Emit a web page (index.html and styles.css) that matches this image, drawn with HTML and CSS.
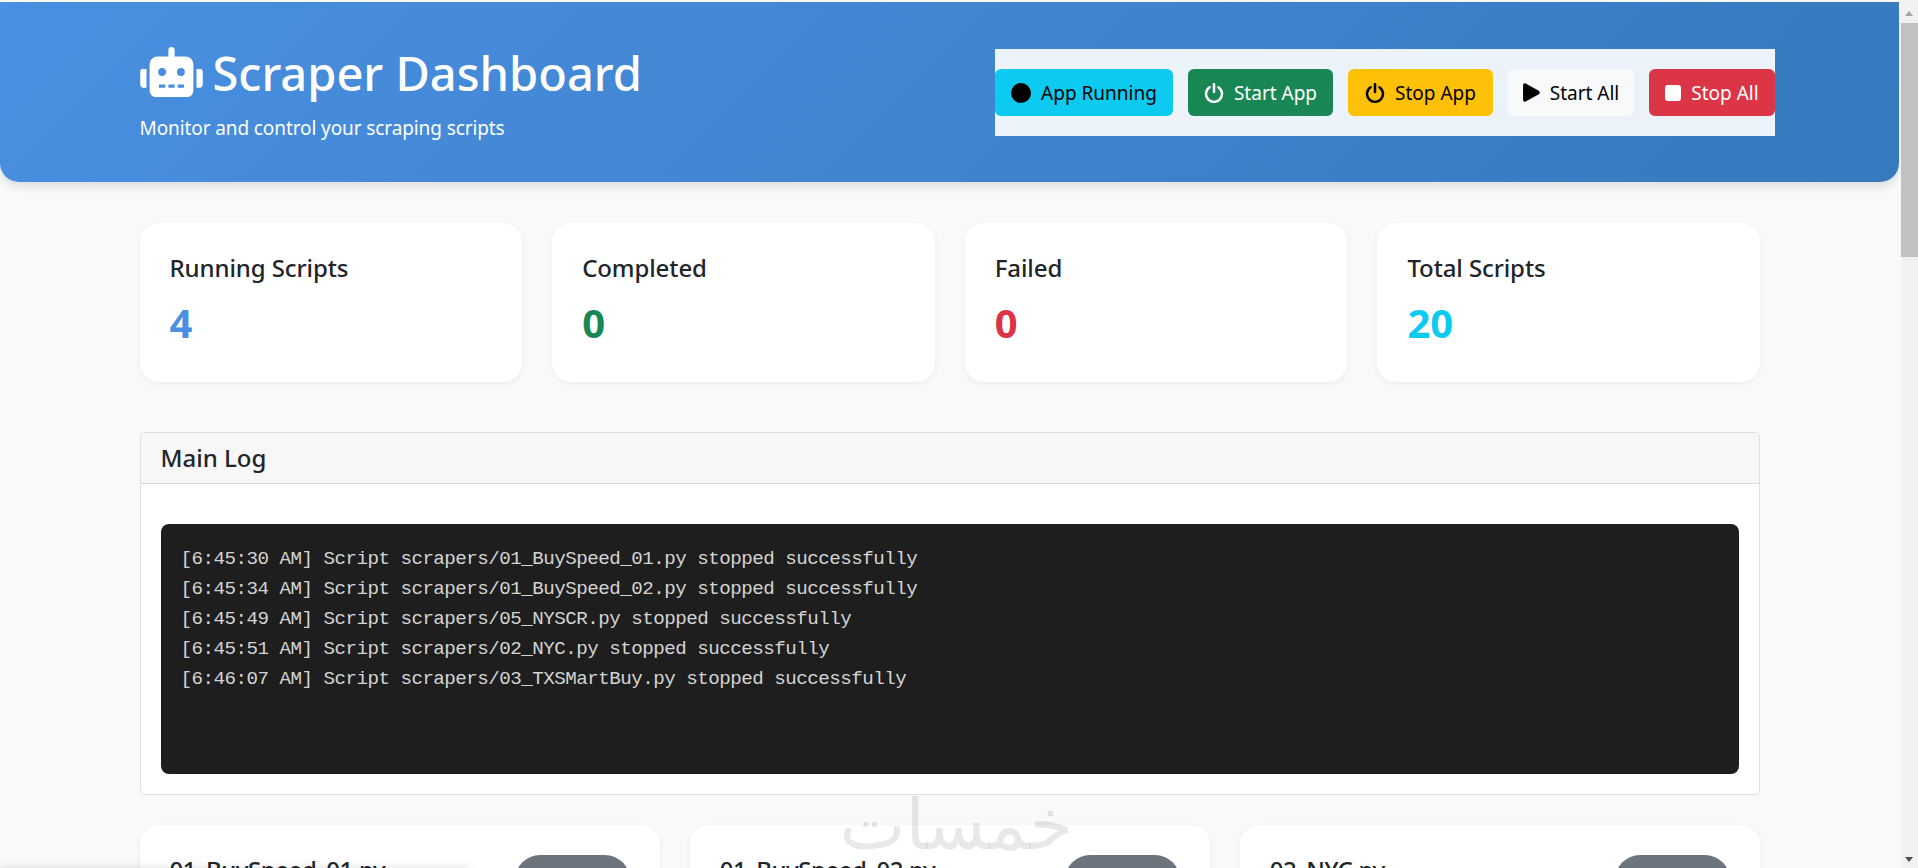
FILE: index.html
```html
<!DOCTYPE html>
<html lang="en">
<head>
<meta charset="utf-8">
<title>Scraper Dashboard</title>
<link rel="stylesheet" href="styles.css">
</head>
<body>
<header class="hero">
  <div class="hero-inner">
    <div class="brand">
      <h1 class="brand-title">
        <svg class="robot" viewBox="0 0 640 512" aria-hidden="true"><path d="M32,224H64V416H32A31.96166,31.96166,0,0,1,0,384V256A31.96166,31.96166,0,0,1,32,224Zm512-48V448a64.06328,64.06328,0,0,1-64,64H160a64.06328,64.06328,0,0,1-64-64V176a79.974,79.974,0,0,1,80-80H288V32a32,32,0,0,1,64,0V96H464A79.974,79.974,0,0,1,544,176ZM264,256a40,40,0,1,0-40,40A39.997,39.997,0,0,0,264,256Zm-8,128H192v32h64Zm96,0H288v32h64ZM456,256a40,40,0,1,0-40,40A39.997,39.997,0,0,0,456,256Zm-8,128H384v32h64ZM640,256V384a31.96166,31.96166,0,0,1-32,32H576V224h32A31.96166,31.96166,0,0,1,640,256Z"/></svg>
        <span class="title-text">Scraper Dashboard</span>
      </h1>
      <p class="brand-sub">Monitor and control your scraping scripts</p>
    </div>
    <div class="actions">
      <button class="btn btn-info w-running"><svg class="ico" viewBox="0 0 20 20"><circle cx="10" cy="10" r="10"/></svg><span class="lbl">App Running</span></button>
      <button class="btn btn-success w-app"><svg class="ico" viewBox="0 0 20 20"><path class="stroke" d="M10 1v8M5.600 4.200a8 8 0 1 0 8.800 0"/></svg><span class="lbl">Start App</span></button>
      <button class="btn btn-warning w-app"><svg class="ico" viewBox="0 0 20 20"><path class="stroke" d="M10 1v8M5.600 4.200a8 8 0 1 0 8.800 0"/></svg><span class="lbl">Stop App</span></button>
      <button class="btn btn-light w-all"><svg class="ico ico-play" viewBox="0 0 16 18"><path d="M0 2.200C0 .6 1.600-.2 2.900.6l12 6.800c1.200.8 1.200 2.400 0 3.200l-12 6.800C1.600 18.200 0 17.400 0 15.800z"/></svg><span class="lbl">Start All</span></button>
      <button class="btn btn-danger w-all"><svg class="ico ico-square" viewBox="0 0 16 16"><rect width="16" height="16" rx="3"/></svg><span class="lbl">Stop All</span></button>
    </div>
  </div>
</header>

<main class="page">
  <section class="stats">
    <div class="stat"><h5 class="stat-title">Running Scripts</h5><div class="stat-value c-primary">4</div></div>
    <div class="stat"><h5 class="stat-title">Completed</h5><div class="stat-value c-success">0</div></div>
    <div class="stat"><h5 class="stat-title">Failed</h5><div class="stat-value c-danger">0</div></div>
    <div class="stat"><h5 class="stat-title">Total Scripts</h5><div class="stat-value c-info">20</div></div>
  </section>

  <section class="log-card">
    <div class="log-head"><h5 class="log-title">Main Log</h5></div>
    <div class="log-body">
      <div class="log-screen">
        <div>[6:45:30 AM] Script scrapers/01_BuySpeed_01.py stopped successfully</div>
        <div>[6:45:34 AM] Script scrapers/01_BuySpeed_02.py stopped successfully</div>
        <div>[6:45:49 AM] Script scrapers/05_NYSCR.py stopped successfully</div>
        <div>[6:45:51 AM] Script scrapers/02_NYC.py stopped successfully</div>
        <div>[6:46:07 AM] Script scrapers/03_TXSMartBuy.py stopped successfully</div>
      </div>
    </div>
  </section>

  <section class="scripts">
    <article class="script"><h5 class="script-name">01_BuySpeed_01.py</h5><span class="badge">Stopped</span></article>
    <article class="script"><h5 class="script-name">01_BuySpeed_02.py</h5><span class="badge">Stopped</span></article>
    <article class="script"><h5 class="script-name">02_NYC.py</h5><span class="badge">Stopped</span></article>
  </section>
</main>

<div class="watermark" lang="ar" dir="rtl">خمسات</div>
<div class="edge-shadow"></div>
<div class="scrollbar" aria-hidden="true">
  <div class="sb-up"><span class="arrow-up"></span></div>
  <div class="sb-thumb"></div>
  <div class="sb-track"></div>
  <div class="sb-down"><span class="arrow-down"></span></div>
</div>
</body>
</html>
```
FILE: styles.css
```css
* { box-sizing: border-box; }

html { background: #f8f9fa; }

body {
  margin: 0;
  padding: 2px 19px 0 0;
  background: #f8f9fa;
  color: #212529;
  font-family: "Noto Sans", "Open Sans", sans-serif;
  font-size: 20px;
  line-height: 1.5;
}

h1, h5, p { margin: 0; }

/* header */
.hero {
  height: 180px;
  padding: 40px 124px 0 139.5px;
  background: linear-gradient(135deg, #4a90e2, #357abd);
  border-radius: 0 0 19px 19px;
  box-shadow: 0 5px 8px rgba(0, 0, 0, 0.1);
  color: #fff;
}
.hero-inner {
  display: flex;
  justify-content: space-between;
  align-items: center;
}
.brand-title {
  display: flex;
  align-items: center;
  gap: 10px;
  height: 60px;
  font-size: 47px;
  font-weight: 500;
  line-height: 60px;
  white-space: nowrap;
}
.title-text { margin-top: 2px; }
.robot { width: 63px; height: 50px; fill: #fff; flex: none; }
.brand-sub {
  margin-top: 11px;
  font-size: 19px;
  line-height: 30px;
  letter-spacing: -0.1px;
}

.actions {
  display: flex;
  gap: 15px;
  padding: 20px 0;
  background: rgba(255, 255, 255, 0.9);
}
.btn {
  display: flex;
  align-items: center;
  justify-content: center;
  gap: 10px;
  height: 47px;
  padding: 0;
  border: 0;
  border-radius: 6px;
  font-family: inherit;
  font-size: 19px;
  white-space: nowrap;
}
.lbl { margin-top: 1px; }
.w-running { width: 178px; }
.w-app { width: 145px; }
.w-all { width: 126px; }
.ico { width: 20px; height: 20px; fill: currentColor; flex: none; }
.ico-play { width: 17px; height: 19px; }
.ico-square { width: 16px; height: 16px; }
.stroke { fill: none; stroke: currentColor; stroke-width: 2.5; stroke-linecap: round; }
.btn-info { background: #0dcaf0; color: #000; }
.btn-success { background: #198754; color: #fff; }
.btn-warning { background: #ffc107; color: #000; }
.btn-light { background: #f8f9fa; color: #000; }
.btn-danger { background: #dc3545; color: #fff; }

.page {
  width: 1620.5px;
  margin: 41px 0 0 139.5px;
}

.stats {
  display: grid;
  grid-template-columns: repeat(4, 1fr);
  gap: 30px;
  margin-bottom: 50px;
}
.stat {
  height: 159px;
  padding: 30px;
  background: #fff;
  border-radius: 19px;
  box-shadow: 0 2px 6px rgba(0, 0, 0, 0.05);
}
.stat-title {
  margin-bottom: 10px;
  font-size: 24px;
  font-weight: 500;
  line-height: 30px;
  letter-spacing: -0.1px;
}
.stat-value {
  font-size: 40px;
  font-weight: 700;
  line-height: 60px;
}
.c-primary { color: #4a90e2; }
.c-success { color: #198754; }
.c-danger { color: #dc3545; }
.c-info { color: #0dcaf0; }

.log-card {
  margin-bottom: 30px;
  background: #fff;
  border: 1px solid rgba(0, 0, 0, 0.125);
  border-radius: 5px;
  overflow: hidden;
}
.log-head {
  height: 51px;
  padding: 10px 20px;
  background: #f7f7f7;
  border-bottom: 1px solid rgba(0, 0, 0, 0.125);
}
.log-title {
  font-size: 24px;
  font-weight: 500;
  line-height: 30px;
}
.log-body { padding: 40px 20px 20px; }
.log-screen {
  height: 250px;
  padding: 20px;
  background: #1e1e1e;
  border-radius: 8px;
  color: #d4d4d4;
  font-family: "Liberation Mono", "DejaVu Sans Mono", monospace;
  font-size: 19.2px;
  letter-spacing: -0.52px;
  line-height: 30px;
}

.scripts {
  display: grid;
  grid-template-columns: repeat(3, 1fr);
  gap: 30px;
}
.script {
  display: flex;
  justify-content: space-between;
  align-items: flex-start;
  height: 291px;
  padding: 30px;
  background: #fff;
  border-radius: 19px;
  box-shadow: 0 2px 6px rgba(0, 0, 0, 0.05);
}
.script-name {
  font-size: 24px;
  font-weight: 500;
  line-height: 30px;
  letter-spacing: -0.45px;
}
.badge {
  width: 115px;
  height: 50px;
  background: #6c757d;
  border-radius: 25px;
  color: #fff;
  font-size: 18px;
  line-height: 50px;
  text-align: center;
}

/* overlays */
.watermark {
  position: fixed;
  left: 843px;
  top: 780px;
  width: 230px;
  color: rgba(0, 0, 0, 0.09);
  font-family: "DejaVu Sans", sans-serif;
  font-size: 70px;
  line-height: 90px;
  text-align: center;
  pointer-events: none;
}
.edge-shadow {
  position: fixed;
  left: 0;
  bottom: -6px;
  width: 470px;
  height: 6px;
  box-shadow: 0 0 8px rgba(0, 0, 0, 0.15);
  pointer-events: none;
}

/* window scrollbar, drawn because the browser hides its own */
.scrollbar {
  position: fixed;
  top: 0;
  right: 0;
  bottom: 0;
  display: flex;
  flex-direction: column;
  width: 17px;
  background: #f1f1f1;
}
.sb-up { height: 23px; padding: 11px 4px 0; }
.sb-thumb { height: 234px; background: #c1c1c1; }
.sb-track { flex: 1; }
.sb-down { height: 17px; padding: 6px 4px 0; }
.arrow-up, .arrow-down {
  display: block;
  width: 0;
  height: 0;
  border-left: 4.5px solid transparent;
  border-right: 4.5px solid transparent;
}
.arrow-up { border-bottom: 5px solid #a3a3a3; }
.arrow-down { border-top: 5px solid #505050; }
```
